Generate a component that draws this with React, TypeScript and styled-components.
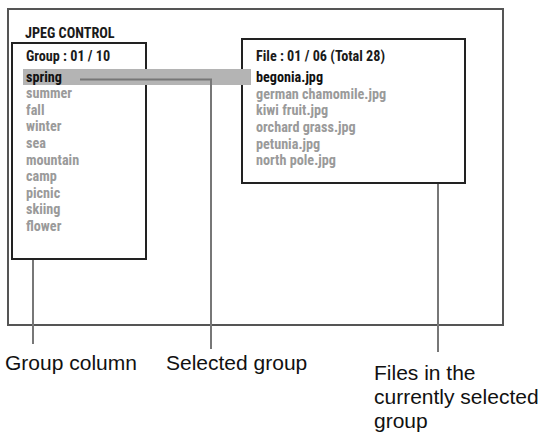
import styled, { createGlobalStyle } from 'styled-components';

const GlobalStyle = createGlobalStyle`
	html, body {
		margin: 0;
		padding: 0;
		background: #fff;
	}
`;

const groups = ['spring', 'summer', 'fall', 'winter', 'sea', 'mountain', 'camp', 'picnic', 'skiing', 'flower'];
const files = ['begonia.jpg', 'german chamomile.jpg', 'kiwi fruit.jpg', 'orchard grass.jpg', 'petunia.jpg', 'north pole.jpg'];

const Page = styled.div`
	position: relative;
	width: 542px;
	height: 435px;
	padding: 8px 0 0 7px;
	box-sizing: border-box;
	font-family: 'Liberation Sans', Arial, sans-serif;
	color: #111;
`;

const Screen = styled.div`
	width: 497px;
	height: 318px;
	box-sizing: border-box;
	border: 2px solid #555;
	display: flex;
	align-items: flex-start;
	gap: 94px;
	padding-left: 2px;
	font-family: 'Roboto Condensed', 'Liberation Sans', sans-serif;
	font-weight: 700;
	font-size: 14.2px;
	line-height: 16.6px;
`;

const LeftColumn = styled.div`
	padding-top: 15.4px;
`;

const Title = styled.div`
	margin-left: 14px;
	color: #1a1a1a;
`;

const Panel = styled.div<{ $w: number; $h: number; $top?: number }>`
	width: ${({ $w }) => $w}px;
	height: ${({ $h }) => $h}px;
	margin-top: ${({ $top }) => $top ?? 0}px;
	box-sizing: border-box;
	border: 2px solid #222;
	padding: 4.4px 0 0 13px;
`;

const PanelHeader = styled.div<{ $gap: number }>`
	color: #1a1a1a;
	margin-bottom: ${({ $gap }) => $gap}px;
`;

const Item = styled.div<{ $active?: boolean }>`
	position: relative;
	color: ${({ $active }) => ($active ? '#111' : '#9a9a9a')};
	white-space: nowrap;
`;

const Highlight = styled.span`
	position: absolute;
	left: -3px;
	top: 0;
	width: 228px;
	height: 16px;
	background: #b4b4b4;
`;

const ItemText = styled.span`
	position: relative;
	z-index: 1;
`;

const Leaders = styled.svg`
	position: absolute;
	left: 0;
	top: 0;
	pointer-events: none;
	z-index: 2;
`;

const Labels = styled.div`
	display: grid;
	grid-template-columns: 161px 208px auto;
	margin-top: 24.7px;
	margin-left: -2px;
	font-size: 21px;
	line-height: 24px;
	color: #111;
`;

const Label = styled.div<{ $drop?: number }>`
	margin-top: ${({ $drop }) => $drop ?? 0}px;
`;

export default function App() {
	return (
		<>
			<GlobalStyle />
			<Page>
				<Screen>
					<LeftColumn>
						<Title>JPEG CONTROL</Title>
						<Panel $w={136} $h={218}>
							<PanelHeader $gap={3.7}>Group : 01 / 10</PanelHeader>
							{groups.map((g, i) => (
								<Item key={g} $active={i === 0}>
									{i === 0 && <Highlight />}
									<ItemText>{g}</ItemText>
								</Item>
							))}
						</Panel>
					</LeftColumn>
					<Panel $w={225} $h={146} $top={28} style={{ paddingTop: 7.7 }}>
						<PanelHeader $gap={5}>File : 01 / 06 (Total 28)</PanelHeader>
						{files.map((f, i) => (
							<Item key={f} $active={i === 0}>
								{f}
							</Item>
						))}
					</Panel>
				</Screen>
				<Labels>
					<Label>Group column</Label>
					<Label>Selected group</Label>
					<Label $drop={10}>
						Files in the
						<br />
						currently selected
						<br />
						group
					</Label>
				</Labels>
				<Leaders width="542" height="435" viewBox="0 0 542 435">
					<g fill="none" stroke="#777" strokeWidth="2">
						<path d="M33 260V344" />
						<path d="M80 79.5H211V349" />
						<path d="M438 184V352" />
					</g>
				</Leaders>
			</Page>
		</>
	);
}
